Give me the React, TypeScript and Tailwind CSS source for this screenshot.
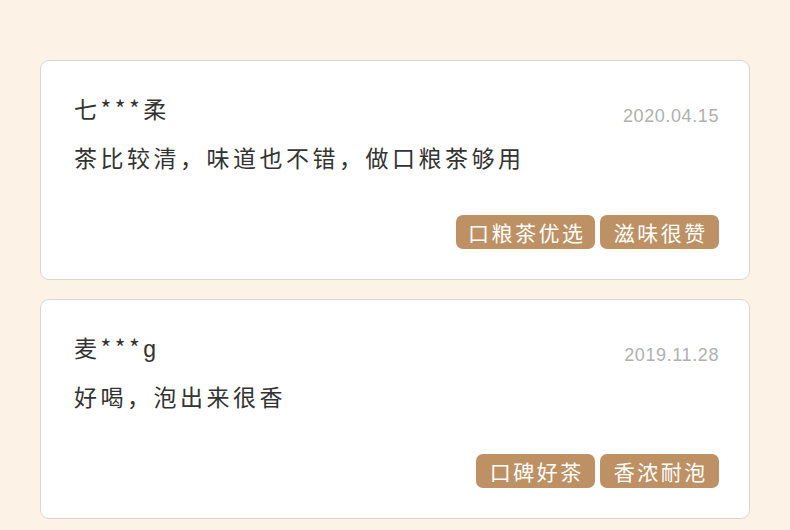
import React from "react";

type Review = { name: string; date: string; text: string; tags: string[] };

const reviews: Review[] = [
  { name: "七***柔", date: "2020.04.15", text: "茶比较清，味道也不错，做口粮茶够用", tags: ["口粮茶优选", "滋味很赞"] },
  { name: "麦***g", date: "2019.11.28", text: "好喝，泡出来很香", tags: ["口碑好茶", "香浓耐泡"] },
];

const cjk = { fontFamily: '"Noto Sans CJK SC", "Noto Sans", sans-serif' };
const latin = { fontFamily: '"Liberation Sans", Arial, sans-serif' };

function Name({ text }: { text: string }) {
  return (
    <>
      {Array.from(text).map((c, i) =>
        /[A-Za-z]/.test(c) ? (
          <span key={i} style={latin}>
            {c}
          </span>
        ) : (
          <span key={i}>{c}</span>
        )
      )}
    </>
  );
}

export default function App() {
  return (
    <div className="w-[790px] h-[530px] bg-[#fdf2e6] pt-[60px] pl-[40px] flex flex-col gap-[19px] overflow-hidden">
      {reviews.map((r) => (
        <div
          key={r.date}
          className="w-[710px] h-[220px] bg-white border border-[#dcd6d0] rounded-[9px] flex flex-col pt-[32px] pl-[33px] pr-[30px] pb-[30px]"
        >
          <div className="flex items-baseline justify-between">
            <div className="text-[23px] leading-[30px] tracking-[3.5px] text-[#333333]" style={cjk}>
              <Name text={r.name} />
            </div>
            <div
              className="text-[18px] leading-[30px] tracking-[0.6px] text-[#b0b0b0] relative top-[4px]"
              style={latin}
            >
              {r.date}
            </div>
          </div>
          <div className="mt-[15px] text-[23px] leading-[30px] tracking-[3.5px] text-[#333333]" style={cjk}>
            {r.text}
          </div>
          <div className="flex-1" />
          <div className="flex justify-end gap-[5px]">
            {r.tags.map((t) => (
              <div
                key={t}
                className="h-[34px] min-w-[119px] px-[12px] rounded-[7px] bg-[#bd9164] text-white text-[21px] leading-[34px] tracking-[2.5px] flex items-center justify-center"
                style={cjk}
              >
                <span className="mr-[-2.5px]">{t}</span>
              </div>
            ))}
          </div>
        </div>
      ))}
    </div>
  );
}
